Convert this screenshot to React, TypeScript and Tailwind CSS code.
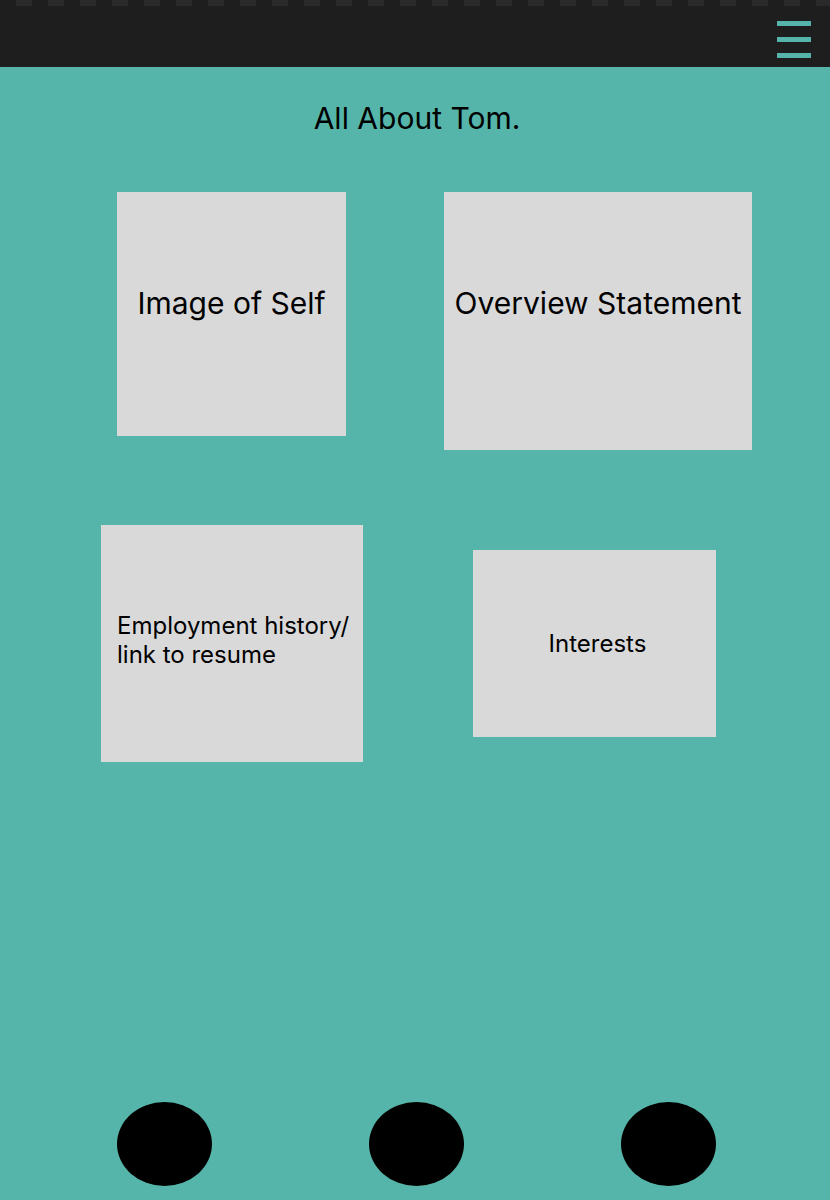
import React from 'react';

const CHECKS = Array.from({ length: 52 });

function Header() {
  return (
    <div className="h-[67px] bg-[#1e1e1e] flex flex-col">
      {/* checker strip along the top edge */}
      <div className="flex h-[6px] overflow-hidden">
        {CHECKS.map((_, i) => (
          <div
            key={i}
            className={i % 2 === 0 ? 'w-[16px] shrink-0 bg-[#1e1e1e]' : 'w-[16px] shrink-0 bg-[#2a2a2a]'}
          />
        ))}
      </div>
      <div className="flex justify-end pr-[19px] pt-[15px]">
        <button className="flex flex-col gap-[11px]" aria-label="Menu">
          <span className="block w-[34px] h-[5px] bg-[#55b5aa]" />
          <span className="block w-[34px] h-[5px] bg-[#55b5aa]" />
          <span className="block w-[34px] h-[5px] bg-[#55b5aa]" />
        </button>
      </div>
    </div>
  );
}

export default function App() {
  return (
    <div className="min-h-[1200px] bg-[#55b5aa] text-black font-['Inter',sans-serif] flex flex-col">
      <Header />

      {/* Title */}
      <h1 className="mt-[33px] h-[36px] leading-[36px] text-center text-[30px] pl-[4px]">All About Tom.</h1>

      {/* Row 1 */}
      <div className="flex items-start mt-[56px]">
        <div className="ml-[117px] w-[229px] h-[244px] bg-[#d9d9d9] flex justify-center pt-[93px]">
          <span className="text-[30px] leading-[36px]">Image of Self</span>
        </div>
        <div className="ml-[98px] w-[308px] h-[258px] bg-[#d9d9d9] flex justify-center pt-[93px]">
          <span className="text-[30px] leading-[36px]">Overview Statement</span>
        </div>
      </div>

      {/* Row 2 */}
      <div className="flex items-start mt-[75px]">
        <div className="ml-[101px] w-[262px] h-[237px] bg-[#d9d9d9] pt-[86px] pl-[16px]">
          <p className="text-[24px] leading-[29px]">
            Employment history/
            <br />
            link to resume
          </p>
        </div>
        <div className="ml-[110px] mt-[25px] w-[243px] h-[187px] bg-[#d9d9d9] flex items-center justify-center">
          <span className="text-[24px] leading-[29px] pl-[6px]">Interests</span>
        </div>
      </div>

      {/* Bottom nav dots */}
      <div className="flex mt-[340px] ml-[117px] gap-[157px]">
        <div className="w-[95px] h-[84px] rounded-[50%] bg-black" />
        <div className="w-[95px] h-[84px] rounded-[50%] bg-black" />
        <div className="w-[95px] h-[84px] rounded-[50%] bg-black" />
      </div>
    </div>
  );
}
